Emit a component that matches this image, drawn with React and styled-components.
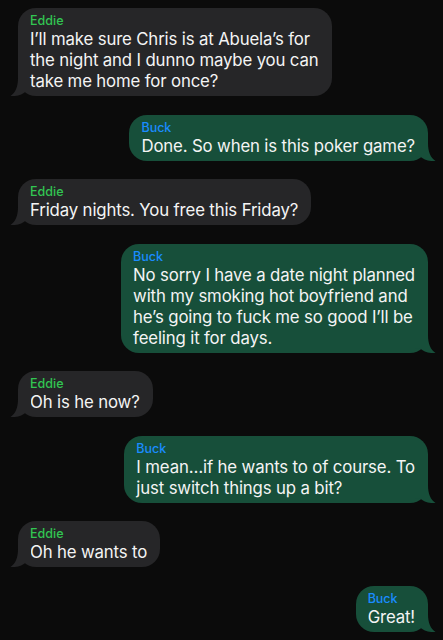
import React from "react";
import styled, { createGlobalStyle } from "styled-components";

const Global = createGlobalStyle`
  html, body { margin: 0; padding: 0; background: #0b0b0b; }
  body { font-family: Inter, "Noto Sans", "Liberation Sans", sans-serif; -webkit-font-smoothing: antialiased; }
`;

const Thread = styled.div`
  display: flex;
  flex-direction: column;
  gap: 18.5px;
  padding: 8px 15px 8px 18px;
  min-height: 640px;
  box-sizing: border-box;
  background: #0b0b0b;
`;

const Row = styled.div`
  display: flex;
  justify-content: ${(p) => (p.$me ? "flex-end" : "flex-start")};
`;

const Bubble = styled.div`
  position: relative;
  background: ${(p) => (p.$me ? "#174f3a" : "#262628")};
  border-radius: 18px;
  padding: 5px 13px 4px 12px;
  color: #f4f4f4;
`;

const Name = styled.div`
  font-size: 12.5px;
  line-height: 16px;
  font-weight: 500;
  color: ${(p) => (p.$me ? "#1a8cff" : "#32c552")};
`;

const Text = styled.div`
  font-size: 16.8px;
  line-height: 21px;
  white-space: nowrap;
  letter-spacing: -0.15px;
`;

const TailSvg = styled.svg`
  position: absolute;
  bottom: 0;
  width: 22px;
  height: 20px;
  ${(p) => (p.$me ? "right: -9px; transform: scaleX(-1);" : "left: -9px;")}
`;

function Tail({ me }) {
  return (
    <TailSvg $me={me} viewBox="0 0 22 20">
      <path
        d="M9 2 C9 11 6.5 16.5 1.5 20 C8 20.6 13.5 18.5 17 15.5 L22 15.5 L22 2 Z"
        fill={me ? "#174f3a" : "#262628"}
      />
    </TailSvg>
  );
}

const messages = [
  { me: false, lines: ["I’ll make sure Chris is at Abuela’s for", "the night and I dunno maybe you can", "take me home for once?"] },
  { me: true, lines: ["Done. So when is this poker game?"] },
  { me: false, lines: ["Friday nights. You free this Friday?"] },
  { me: true, lines: ["No sorry I have a date night planned", "with my smoking hot boyfriend and", "he’s going to fuck me so good I’ll be", "feeling it for days."] },
  { me: false, lines: ["Oh is he now?"] },
  { me: true, lines: ["I mean…if he wants to of course. To", "just switch things up a bit?"] },
  { me: false, lines: ["Oh he wants to"] },
  { me: true, lines: ["Great!"] },
];

export default function App() {
  return (
    <>
      <Global />
      <Thread>
        {messages.map((m, i) => (
          <Row key={i} $me={m.me}>
            <Bubble $me={m.me}>
              <Name $me={m.me}>{m.me ? "Buck" : "Eddie"}</Name>
              {m.lines.map((l, j) => (
                <Text key={j}>{l}</Text>
              ))}
              <Tail me={m.me} />
            </Bubble>
          </Row>
        ))}
      </Thread>
    </>
  );
}
